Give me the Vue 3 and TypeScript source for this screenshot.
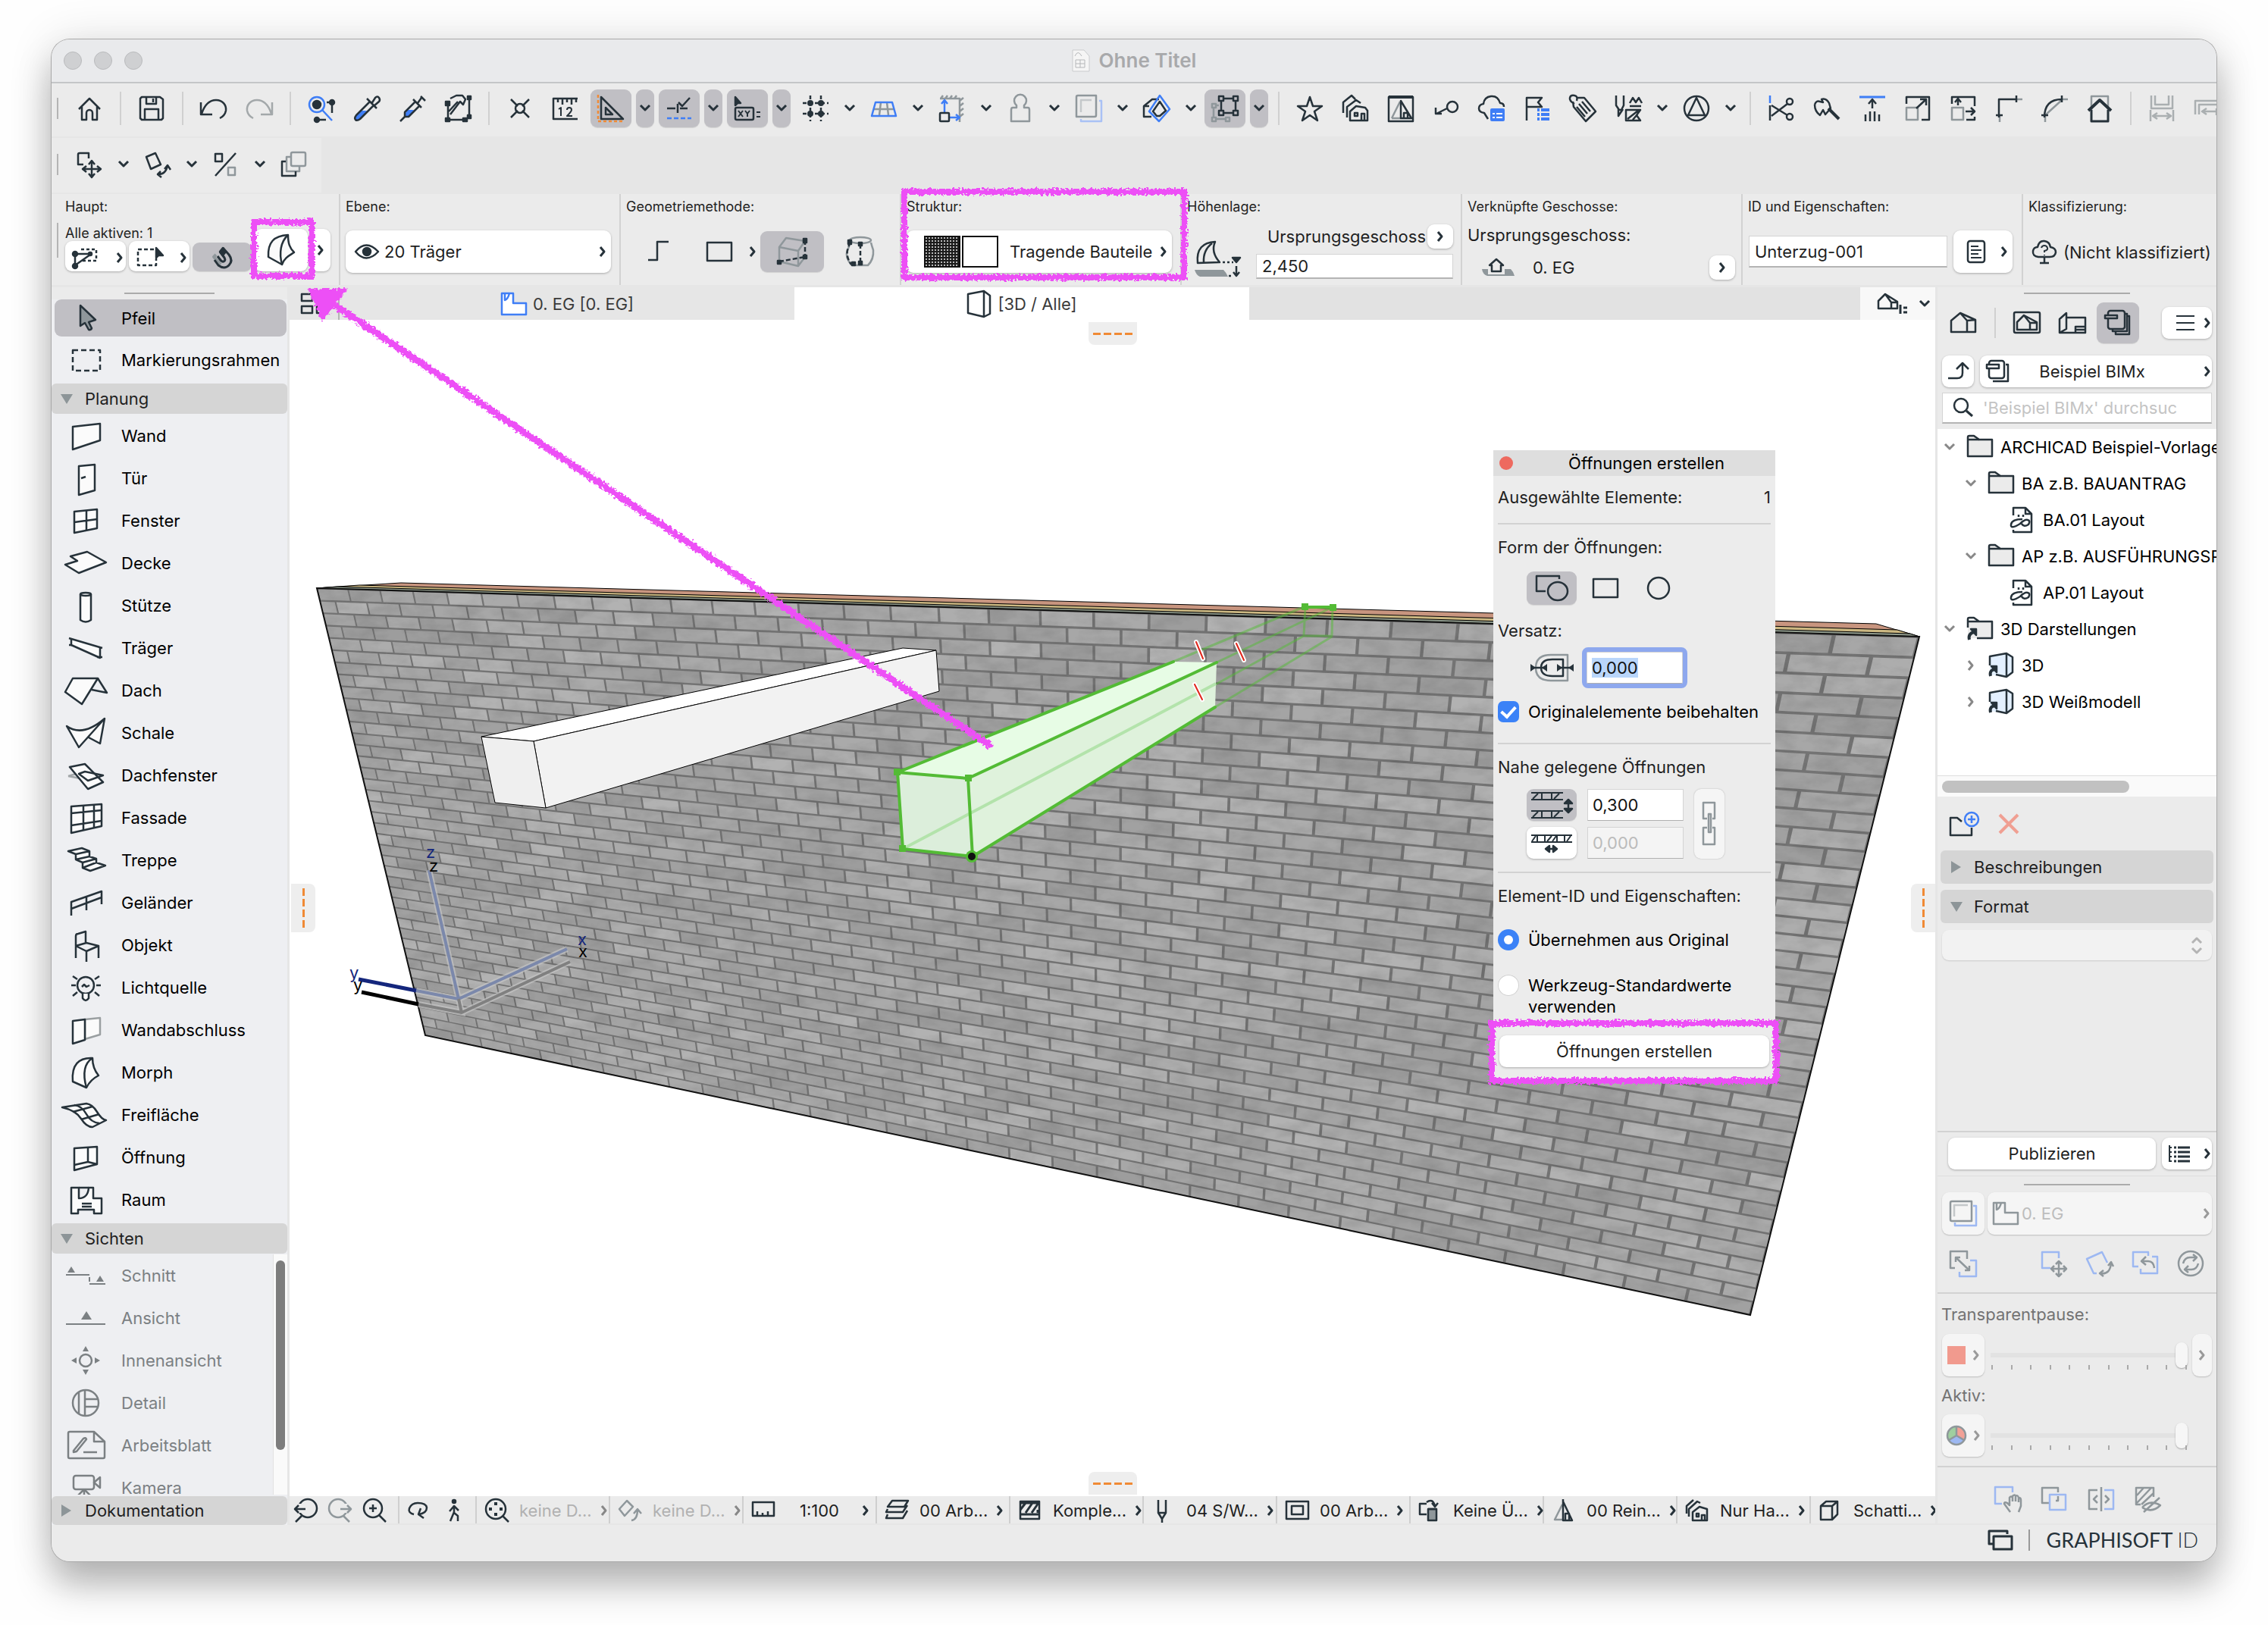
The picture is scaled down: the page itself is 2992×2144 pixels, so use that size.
<script setup lang="ts">
import { h, onMounted, ref } from 'vue'

const B = '#3f7ef6'
const G = '#8f979b'
const O = '#f08a35'

/* Inner markup of every glyph, keyed by name. Strokes inherit currentColor. */
const glyphs: Record<string, string> = {
  right: '<path d="M1 1l5 6l-5 6" stroke-width="3"/>',
  down: '<path d="M1 1l6 6l6-6" stroke-width="3"/>',
  home: '<path d="M4 19L18 5L32 19M8 16v17h6v-9a4 4 0 0 1 8 0v9h6V16"/>',
  save: '<path d="M5 3h24l4 3v25l-2 2H5l-2-2V5zM11 3v9h13V3M20 5v5M9 33V19h18v14"/>',
  undo: '<path d="M1 10v16h15M2 25C6 13 13 7 21 7c9 0 14 7 13 14c-1 5-4 8-8 10"/>',
  redo: '<path stroke="#a3a8aa" d="M35 10v16H20M34 25C30 13 23 7 15 7C6 7 1 14 2 21c1 5 4 8 8 10"/>',
  find: `<circle cx="12" cy="13" r="10" stroke="${B}"/><circle cx="12" cy="13" r="5" fill="currentColor"/><path stroke="${B}" d="M19 20L32 34"/><path d="M25 10h7v14M12 33h12"/><circle cx="32" cy="10" r="3" fill="currentColor"/><circle cx="12" cy="33" r="3" fill="currentColor"/>`,
  dropper: `<path d="M5 26L10 21h8L8 33q-3 2-5-1t2-6" fill="${B}" stroke="none"/><path d="M22 9L4 27q-3 4-1 6t6-1L27 14M18 5l13 13M24 12l5-8q3-3 5 0t0 5l-7 6"/>`,
  syringe: `<path d="M9 24l3-4h8l-6 8l-5 1z" fill="${B}" stroke="none"/><path d="M22 9L8 23v6h5L27 15M19 6l11 11M25 11l5-7M29 2l6 6M8 29l-6 6"/>`,
  hammer: '<path d="M5 14v18M5 33h22M33 5v23M8 5l8-4h8l4 5l-3 7l-4-4L8 26M18 9L6 22"/><g fill="currentColor"><rect x="2" y="9" width="5" height="5"/><rect x="2" y="31" width="5" height="4"/><rect x="25" y="31" width="5" height="4"/><rect x="31" y="2" width="4" height="4"/><rect x="31" y="27" width="4" height="4"/></g>',
  snap: '<path d="M6 6l9 9M21 21l9 9M30 6l-9 9M15 21L6 30"/><circle cx="18" cy="18" r="6"/>',
  ruler: '<path d="M34 5H2v27h32M8 5v5M14 5v8M20 5v5M26 5v8M32 5v5"/><path stroke-width="2" d="M9 19l3-2v11M20 20q0-3 3-3t3 3q0 2-6 8h7"/>',
  tri: `<path d="M5 3v29h29zM11 17v9h9z"/><path stroke="${O}" stroke-dasharray="4 3" d="M1 0v35h35"/>`,
  guide: `<path d="M2 18h11M19 18h10M16 12v12M17 10l5 5L32 4"/><path stroke="${B}" stroke-dasharray="6 3" d="M2 31h32"/>`,
  xy: '<path d="M2 3v11l3-3l4 0z" fill="currentColor"/><rect x="2" y="17" width="24" height="16" rx="2"/><path stroke-width="2" d="M6 21l6 8M12 21l-6 8M15 21l3 4l3-4M18 25v4M30 23h5M30 29h5"/>',
  grid: '<path stroke-dasharray="5 3" d="M11 1v34M25 1v34M1 11h34M1 25h34"/><g fill="currentColor" stroke="none"><circle cx="11" cy="11" r="4"/><circle cx="25" cy="11" r="4"/><circle cx="11" cy="25" r="4"/><circle cx="25" cy="25" r="4"/></g>',
  plane: `<path stroke="${G}" d="M4 19h28M14 10l-2 17M22 10l2 17"/><path stroke="${B}" d="M7 10h22l5 18H2z"/>`,
  origin: `<path stroke="${G}" d="M2 5h26v31M3 5l3-4M9 5l3-4M15 5l3-4M21 5l3-4M28 8l5-4M28 15l5-4M28 22l5-4M28 29l5-4"/><path stroke="${B}" d="M8 23V9M4 12l4-5l4 5M14 30h13M23 26l5 4l-5 4"/><rect x="2" y="24" width="12" height="11" rx="1"/>`,
  person: `<path stroke="${G}" d="M13 14a8 8 0 1 1 10 0v3h5q2 0 2 3v15H6V20q0-3 2-3h5z"/>`,
  trace: `<path stroke="${G}" d="M2 3q0-2 2-2h24v26q0 2-2 2H2z"/><path stroke="#c4c8ca" d="M8 23V7h14"/><path stroke="#a9c1f5" d="M32 8h3v27H8v-3"/>`,
  cut: `<path d="M11 29H1V15L12 6h9M1 15h7M22 9l-9 13l5 6h4l8-7z"/><path stroke="${B}" d="M8 22L22 1l13 18L21 35z"/>`,
  group: `<g stroke="${G}"><rect x="1" y="12" width="5" height="5"/><rect x="1" y="30" width="5" height="5"/><rect x="19" y="30" width="5" height="5"/><path d="M3 17v13M6 32h13M6 14h4"/></g><rect x="10" y="2" width="6" height="6"/><rect x="29" y="2" width="6" height="6"/><rect x="10" y="21" width="6" height="6"/><rect x="29" y="21" width="6" height="6"/><path d="M16 5h13M16 24h13M13 8v13M32 8v13"/>`,
  star: '<path d="M18 3l4 12h12l-10 7l4 12l-10-7l-10 7l4-12l-10-7h12z"/>',
  fav: '<path d="M2 24V10L13 1l5 5M7 30V16l12-9l6 4M11 34V22l8-7l12 2l3 4v13zM17 24h4v4h-4zM26 34v-9h4v9"/>',
  view3d: `<path stroke="${G}" d="M6 31L17 9M6 31h12"/><rect x="2" y="3" width="32" height="32"/><path d="M2 3h32" stroke-width="4"/><path d="M18 8v23h14zM22 31v-7h5v7"/>`,
  key: '<circle cx="26" cy="16" r="7"/><path d="M19 18L5 25M4 17v8h8"/>',
  cloud: `<path d="M13 32L8 24q-7-1-7-6t6-6q1-9 10-10t12 9q5 0 5 5"/><g stroke="none" fill="${B}"><rect x="16" y="18" width="19" height="17" rx="2"/></g><path stroke="#fff" stroke-width="2" d="M19 25h3M24 25h8M19 30h3M24 30h8"/>`,
  flag: `<path d="M4 34V4h20l-5 6l5 6H4"/><path stroke="${B}" stroke-width="4" d="M18 20h3M23 20h11M18 26h3M23 26h11M18 32h3M23 32h11"/>`,
  tag: '<path d="M10 4h10L35 22L22 35L6 16L5 9M7 12Q0 8 1 4t6-3t3 7M13 12l11 13M17 9l11 13M10 16l11 13"/>',
  pens: '<path d="M2 1v13l4 6h3l3-6V1M5 19v9l6-9M20 11l4-7l4 6l4-6l4 7M20 15h15M15 20h19l-5 7l5 7H15zM17 32l14-11M24 33l6-7"/>',
  compass: '<circle cx="18" cy="18" r="16"/><path d="M18 4L7 27h22z"/>',
  scissors: `<path stroke="${B}" d="M3 1v10"/><path d="M3 14v20M5 14l21 13M5 28L26 12"/><circle cx="29" cy="9" r="4"/><circle cx="29" cy="29" r="4"/>`,
  split: '<path d="M2 13q2-6 7-4l4 1l-2-4q6-2 10 5l2 7l-7 8l-3-6l-4 7q-7-5-7-14"/><path stroke-width="4" d="M20 18l14 14"/>',
  adjust: `<path stroke="${B}" stroke-width="3" d="M1 3h34"/><path d="M18 18V6M13 12l5-6l5 6M9 26v9M15 22v13M21 22v13M27 26v9"/>`,
  resize: `<rect x="3" y="17" width="15" height="16" stroke="${G}"/><path d="M3 12V3h30v30H23M16 18L29 6M21 6h8v8"/>`,
  stretch: `<rect x="3" y="17" width="15" height="16" stroke="${G}"/><path d="M3 12V3h30v7M33 29v4H22M33 10v5M11 14V6M7 10l4-5l4 5M21 22h10M28 17l5 5l-5 5"/>`,
  corner: `<path stroke="${G}" d="M6 28v8M28 6h8"/><path d="M1 27h9M5 30V6h24M28 1v9"/>`,
  fillet: `<path stroke="${G}" d="M6 28v8M28 6h8M6 27L28 7"/><path d="M1 27h9M5 30Q5 6 28 6M28 1v9"/>`,
  roofhome: `<path stroke="${G}" d="M7 20V2h22v18"/><path stroke-width="4" d="M3 21L18 7l15 14"/><path stroke-width="3" d="M7 20v15h22V20"/>`,
  dimA: `<g stroke="#aaafb1"><path d="M4 1v17h28V1M9 1v12h18V1M3 20v15M33 20v15M6 28h24M12 24l-6 4l6 4M24 24l6 4l-6 4"/></g>`,
  dimB: `<g stroke="#aaafb1"><path d="M2 26V8h34M7 26V13h29M12 22h24M17 18l-6 4l6 4M30 18v9"/></g>`,
  move: '<path d="M10 18H3V5q0-2 2-2h12v7M21 14v20M10 24h22M17 18l4-5l4 5M17 30l4 5l4-5M14 20l-5 4l5 4M28 20l5 4l-5 4"/>',
  rotate: '<path d="M9 24L3 8L15 3l7 15zM19 31q10 0 12-12M27 24l4-5l4 6M22 27l-4 4l5 4"/>',
  mirror: `<rect x="4" y="4" width="9" height="10"/><path d="M31 3L4 33"/><rect x="21" y="22" width="9" height="10" stroke="${G}"/>`,
  multi: `<g stroke="${G}"><rect x="14" y="2" width="19" height="18" rx="2"/><path d="M14 8H8v19h17v-7"/></g><path d="M7 14H2v19h18v-6"/>`,
  seldash: '<path stroke-dasharray="4 3" d="M12 3h20v15H14"/><path d="M4 9h20M4 9v16M4 24L24 10"/><g fill="currentColor"><circle cx="4" cy="9" r="3"/><circle cx="4" cy="25" r="3"/><circle cx="24" cy="9" r="2"/></g>',
  marq: '<path stroke-dasharray="5 3" d="M24 3H3v21h24v-9"/><path d="M27 1v13l3-3h6z" fill="currentColor"/>',
  magnet: `<path stroke="${G}" stroke-width="4" d="M8 13l-3 3l9 10"/><path stroke-width="3" d="M17 4l8 9q6 8 0 14q-6 6-14 0l-5-7M13 9l6 8q2 4-1 5q-2 1-5-3l-3-4"/><path fill="currentColor" d="M13 9l4-5l4 5l-4 5z"/>`,
  morph: '<path fill="#fafafa" d="M2 30C1 11 9 2 28 1C28 12 30 18 36 24C30 28 23 31 20 40z"/><path d="M28 1C18 10 16 25 20 40"/>',
  eye: '<path d="M1 12Q15-5 31 12Q15 29 1 12z"/><circle cx="16" cy="12" r="5" fill="currentColor"/>',
  step: '<path d="M2 25h12V1h15"/>',
  rect: '<rect x="2" y="2" width="32" height="24"/>',
  frame3d: `<path stroke="${G}" d="M3 33V14L12 2l25 4M3 14l25 5v20L3 33M28 19l9-13M28 39l9-12"/><path d="M37 5v22M3 33l34-6" stroke-dasharray="6 3"/><g fill="currentColor"><rect x="35" y="3" width="4" height="5"/><rect x="35" y="25" width="4" height="4"/><rect x="1" y="32" width="4" height="4"/></g>`,
  barrel: `<g stroke="${G}"><ellipse cx="20" cy="5" rx="14" ry="4"/><path d="M34 8q1 4 3 10q1 12-7 20H9Q-1 28 3 18Q6 12 6 8"/></g><path d="M6 8q-1 4-3 10Q1 27 8 37M20 10v26" stroke-dasharray="6 3"/><g fill="currentColor"><rect x="4" y="5" width="4" height="5"/><rect x="18" y="8" width="4" height="4"/><rect x="9" y="34" width="4" height="4"/><rect x="18" y="33" width="4" height="4"/></g>`,
  hoehe: `<path stroke="none" fill="${G}" d="M1 38h38q4 4 6 9H8q-5-2-7-9z"/><path d="M5 29C3 10 12 2 28 1C24 10 26 19 34 28z"/><path d="M24 3Q12 12 13 28"/><path stroke-dasharray="3 3" d="M38 28h14M46 46h6"/><path d="M56 33v12M52 41l4 5l4-5"/><path d="M51 22h10l-5 6z" fill="currentColor"/>`,
  geschoss: `<path stroke="none" fill="${G}" d="M1 14h8v7h22v-7h8q4 4 5 9H8q-6-2-7-9z"/><path d="M20 1L11 9h3v8h12V9h3z"/>`,
  doc: '<rect x="2" y="2" width="22" height="28" rx="3"/><path d="M6 9h10M6 14h14M6 19h10M6 24h14" stroke-width="2"/>',
  cloudq: '<path d="M9 23Q1 22 2 15q1-5 6-5q2-9 9-8t8 8q7 1 7 7q-1 6-8 6zM17 24v7M11 31h12"/><path stroke-width="2" d="M13 11q1-3 4-3t4 3t-4 4v2M17 20v1"/>',
  panes: '<path d="M2 2h14v9H2zM22 2h14v9H22zM2 18h14v9H2zM22 18h14v9H22z"/>',
  plan: `<path stroke="${B}" fill="#fff" d="M2 2h15v13h17v15H2z"/><path stroke="${B}" d="M6 2v9q4-1 6-9"/>`,
  box3d: '<path d="M2 5L23 1v34L2 30zM23 1l8 6v24l-8 4"/>',
  houseList: '<path d="M2 21V11L11 2l16 10v9zM11 2l8 11v8M19 13h8"/><path d="M31 16v12M35 20h5M35 26h5" stroke-width="3"/>',
  house: '<path d="M2 27V12L14 2l20 9v16zM14 2l9 10v15M23 12l11-1"/>',
  houseFrame: '<rect x="1" y="1" width="34" height="27" rx="2"/><path d="M5 24V14l9-9l17 9v10zM14 5l8 10v9M22 15h9"/>',
  layoutPlan: '<path d="M1 28V10L10 2v21L1 28h34V8H10M22 28v-8h13M22 24h13"/>',
  books: '<rect x="5" y="1" width="22" height="24" rx="3"/><path d="M27 5h3v23H11v-3M31 8h2v24H15v-3"/><path fill="#c0bfc4" d="M1 7h16v4H1z"/>',
  book: '<rect x="4" y="1" width="20" height="23" rx="3"/><path d="M26 6h3v22H9"/><path fill="#fff" d="M1 6h16v5H1z"/>',
  up: '<path d="M2 22h12q7 0 7-7V3M13 10l8-8l8 8"/>',
  lens: '<circle cx="11" cy="10" r="9"/><path stroke-width="3" d="M18 17l8 7"/>',
  burger: '<path stroke-width="2" d="M1 2h24M1 11h24M1 20h24"/>',
  folder: '<path fill="#ebebeb" d="M2 30V5q0-2 2-2h6l7 5h17v22z"/><path d="M2 8h15"/>',
  folderLink: '<path fill="#ebebeb" stroke="none" d="M2 8h32v22H2z"/><path d="M2 16V5q0-2 2-2h6l7 5h17v22H14M2 8h15"/><path stroke-width="4" d="M4 32q-2-8 6-10"/><path d="M6 18h7v8z" fill="currentColor"/>',
  cubeLink: '<path fill="#e3f0ff" stroke="none" d="M3 6L25 2l8 5v20l-8 6L3 30z"/><path d="M3 18V6L25 2l8 5v20l-8 6l-14-3M25 2v31"/><path stroke-width="4" d="M4 32q-2-8 6-9"/><path d="M5 19h7v8z" fill="currentColor"/>',
  sheet: '<path d="M6 12V2h16l8 8v24H6v-3M22 2v8h8"/><path d="M18 17Q4 17 3 24t12-1q6-6 10-5t1 6q-6 4-9-1M13 11v3M19 11v3"/>',
  newFolder: `<path d="M30 22v10H2V9h9l6 5"/><circle cx="30" cy="11" r="9" stroke="${B}"/><path stroke="${B}" d="M30 6v10M25 11h10"/>`,
  cross: '<path stroke="#f09f92" stroke-width="4" d="M2 3l24 24M26 3L2 27"/>',
  updown: '<path stroke="#b4b4b4" stroke-width="3" d="M1 7l6-6l6 6M1 14l6 6l6-6"/>',
  listTree: '<path stroke-width="2" d="M2 2v22M2 5h3M2 11h3M2 17h3M2 23h3"/><path stroke-width="3" d="M8 5h3M8 11h3M8 17h3M8 23h3M13 5h16M13 11h16M13 17h16M13 23h16"/>',
  traceW: `<path stroke="${G}" d="M2 4q0-2 2-2h26v26H4q-2 0-2-2z"/><path stroke="#c4c8ca" d="M7 22V7h18"/><path stroke="#9db8f2" d="M32 8h4v26H8v-4"/>`,
  planG: `<path stroke="${G}" d="M2 2h15v13h17v15H2zM6 2v9q4-1 6-9"/>`,
  swap: `<path stroke="${G}" d="M8 24H2V2h22v10M9 10l18 17M9 16v-6h6M27 21v6h-6"/><path stroke="#9db8f2" d="M28 14h8v21H14v-6"/>`,
  moveB: `<path stroke="#9db8f2" d="M13 24H2V3h22v8"/><path stroke="${G}" d="M24 15v20M14 25h20M20 19l4-4l4 4M20 31l4 4l4-4M18 21l-4 4l4 4M30 21l4 4l-4 4"/>`,
  rotateB: `<path stroke="#9db8f2" d="M14 31h-4L1 12L21 3l7 14"/><path stroke="${G}" d="M19 31q13 2 14-14M29 21l4-5l3 6M23 27l-5 4l5 4"/>`,
  backB: `<path stroke="#9db8f2" d="M9 22H2V3h20v5M27 9h7v22H12v-6"/><path stroke="${G}" d="M14 15h8q7 0 8 9M19 9l-6 6l6 5"/>`,
  refresh: `<g stroke="${G}"><circle cx="18" cy="18" r="16"/><path d="M8 18q2-8 9-8h8M21 6l5 4l-5 5M28 18q-2 8-9 8h-8M15 21l-5 5l5 4"/></g>`,
  hand: `<path stroke="#9db8f2" d="M11 24H2V2h23v7"/><path stroke="${G}" d="M22 35l-8-11q0-3 4-1l3 3V16q2-3 4 0v-2q3-3 4 0q3-2 4 2q3 0 3 3v8l-3 8M25 16v5M29 15v6M33 16v6"/>`,
  unite: `<path stroke="${G}" d="M11 23H2V3h21v6M20 20h3v-6"/><rect x="12" y="12" width="21" height="20" stroke="#9db8f2"/>`,
  splitV: `<path stroke="${G}" d="M13 31H2V6h11M18 2v32M13 13l-5 5l5 5M23 13l5 5l-5 5"/><path stroke="#9db8f2" d="M22 6h12v25H22"/>`,
  hide: `<g stroke="${G}"><path d="M8 25H2V3h23v12M3 13L12 3M3 23L22 3M9 25l16-15"/><path d="M10 29q10-11 24-3q-11 11-24 3M12 35L33 16"/></g>`,
  pie: '<circle cx="13" cy="13" r="12" fill="#9db8f2" stroke="none"/><path d="M13 13V1A12 12 0 0 0 3 19z" fill="#9fcf9f" stroke="none"/><path d="M13 13V1A12 12 0 0 1 23 19z" fill="#f2a196" stroke="none"/><path stroke="#8f979b" d="M13 1v12L3 19M13 13l10 6"/><circle cx="13" cy="13" r="12" stroke="#8f979b"/>',
  windows: '<path stroke-width="3" d="M7 19H2V2h24v4"/><rect x="8" y="9" width="24" height="17" stroke-width="3"/>',
  zprev: '<circle cx="20" cy="13" r="12"/><path fill="#ebebeb" stroke="none" d="M5 7h8v12H5z"/><path d="M17 14H3M8 9l-5 5l5 5M12 23l-8 8"/>',
  znext: `<g stroke="${G}"><circle cx="14" cy="13" r="12"/><path fill="#ebebeb" stroke="none" d="M20 7h8v12h-8z"/><path d="M17 14h14M26 9l5 5l-5 5M21 23l8 8"/></g>`,
  zin: '<circle cx="14" cy="13" r="12"/><path d="M14 8v10M9 13h10M22 22l9 9"/>',
  zfit: '<circle cx="15" cy="14" r="13"/><path stroke-width="4" d="M15 5v4M15 19v4M6 14h4M20 14h4"/><path d="M24 23l8 8"/>',
  orbit: '<path d="M9 19Q1 17 3 11Q6 4 14 4q11 0 12 6q0 7-10 9M18 11l-3 8l7 5"/>',
  walk: '<circle cx="12" cy="3" r="2" fill="currentColor"/><path d="M12 8v9l-5 12M12 18l5 4v7M6 16l6-7l6 6"/>',
  dia: `<path stroke="${G}" d="M2 14L12 3l8 8L9 23zM18 29q8-1 8-14M21 20l5-6l5 6"/>`,
  scale: '<path d="M2 5h28v18H2zM8 23v-6M15 23v-4M22 23v-6"/>',
  layers: '<path d="M10 3h21l-5 8H4zM4 14l-2 4h22l6-9M4 21l-2 5h22l6-10"/>',
  hatch: '<rect x="3" y="4" width="25" height="23"/><path stroke-width="3" d="M3 6h25M3 21h25M3 15l7-9M10 19l9-13M18 19l9-13M26 19v-4"/>',
  pen: '<path d="M9 2v17l5 8l5-8V2M9 19h10M14 26v6"/>',
  frame: '<rect x="2" y="4" width="29" height="23"/><rect x="9" y="10" width="15" height="11"/>',
  override: `<path d="M11 21H2V7h9"/><rect x="13" y="14" width="11" height="15" fill="${G}"/><path d="M11 5q8-6 11 5M18 6l4 5l4-5M13 14h11"/>`,
  reno: `<path stroke="${G}" d="M14 8L4 28h10"/><path d="M15 1v28h12L15 4M18 28v-8h5v8"/>`,
  nurh: '<path d="M2 20V10l9-8M5 24V14L16 4l4 2M10 29V18l9-7l10 3v15zM15 20h3v4h-3zM22 29v-7h4v7"/>',
  shade: '<path d="M3 10l7-6h15v17l-7 7H3zM3 10h15v18M18 10l7-6"/>',
  /* toolbox: 60 × 44 drawing box */
  pfeil: `<path fill="${G}" d="M22 3v27l6-4l5 9q3 1 4-2l-4-8l9-3z"/>`,
  rahmen: '<path stroke-dasharray="7 4" d="M12 9h36v27H12z"/>',
  wand: '<path fill="#fbfbfb" d="M12 8L48 4V26L12 38z"/>',
  tuer: '<path fill="#fbfbfb" d="M20 4L41 2V36L20 42z"/><path d="M23 20l6-2"/>',
  fenster: '<path fill="#fbfbfb" d="M14 8L44 5V30L14 36z"/><path d="M30 7v26M14 22l30-4"/>',
  decke: '<path fill="#fbfbfb" d="M2 22l16-5l-9-6L31 5L56 19L20 33z"/>',
  stuetze: '<path fill="#fbfbfb" d="M22 5v34q7 5 14 0V5"/><ellipse cx="29" cy="5" rx="7" ry="2"/>',
  traeger: '<path fill="#fbfbfb" d="M10 8v8L48 33V20"/><path d="M7 7L51 20M7 16h4M44 32h7"/>',
  dach: '<path fill="#fbfbfb" d="M2 22L12 4h33L24 38z"/><path d="M45 4l12 19l-20-4"/>',
  schale: '<path fill="#fbfbfb" d="M4 11Q25 26 54 1L20 39zM54 1l-6 33l-15-8"/>',
  dachfenster: '<path stroke="#a3a8aa" d="M6 21L27 15M6 21l16 3"/><path fill="#fbfbfb" d="M8 9L28 5L52 29L32 38z"/><path d="M20 18l8-3L52 20L32 27z"/>',
  fassade: '<path fill="#fbfbfb" d="M10 5L50 2V31L10 40z"/><path d="M26 4v33M40 3v30M10 14l40-4M10 30l40-6"/>',
  treppe: '<path fill="#fbfbfb" d="M6 8L24 4l10 4L16 12zM16 12v7l18-4V8M16 19l9 4l18-5l-9-3M25 23v7l10 4l20-7l-12-4v-5M25 30l18-7"/>',
  gelaender: '<path d="M10 37V19L50 5V22M10 28L50 13M30 12v18"/>',
  objekt: '<path d="M16 37V8q0-3 3-3l10-3v16M16 21l14-4l16 4l-16 7zM30 28v14M46 21v16"/>',
  licht: '<circle cx="29" cy="17" r="11"/><path fill="#fbfbfb" d="M25 28v6q4 6 8 0v-6M24 19l3-3l3 3l4-2M12 5l6 4M10 17h6M12 31l6-5M47 5l-6 4M43 17h6M47 31l-6-5"/>',
  wandab: '<path fill="#fbfbfb" stroke="#9a9fa1" d="M28 6L48 4V26L28 32z"/><path fill="#fbfbfb" d="M12 8L28 6V33L12 38z"/>',
  morphT: '<path fill="#fbfbfb" d="M12 32C10 10 20 0 38 1C38 12 41 18 46 24C40 27 34 32 30 40z"/><path d="M38 1C27 8 25 22 30 40"/>',
  frei: '<path fill="#fbfbfb" d="M-2 10L30 5Q38 6 44 16T56 27L38 36Q30 36 23 25T-2 10zM14 7Q24 8 30 19T47 31M12 16l26-7M23 26l24-7"/>',
  oeffnung: '<path fill="#fbfbfb" d="M14 8L44 6V29L14 37z"/><path d="M32 7v19L14 30M32 26l12 3"/>',
  raum: '<path fill="#fbfbfb" d="M10 4h10v14q12 0 13-14h6v14h11v20H40v-5H19v5H10z"/><path d="M24 25h13M24 29h13M20 4h13"/>',
  schnitt: '<path stroke-width="2" d="M3 19h31M34 31h21M34 22v6"/><path stroke="none" fill="currentColor" d="M5 16l5-8l5 8zM43 28l5-8l5 8z"/>',
  ansicht: '<path stroke-width="2" d="M3 28h52"/><path stroke="none" fill="currentColor" d="M23 22l7-11l7 11z"/>',
  innen: '<circle cx="29" cy="20" r="8"/><path stroke="none" fill="currentColor" d="M25 8l4-7l4 7zM25 32l4 7l4-7zM17 16l-7 4l7 4zM41 16l7 4l-7 4z"/>',
  detail: '<circle cx="29" cy="20" r="17"/><path d="M20 6v28M28 3v34M28 15h17M28 25h17"/>',
  blatt: '<path d="M8 2h32l14 13v20q0 2-2 2H8q-2 0-2-2V4q0-2 2-2zM40 2v13h14M13 27L26 11q3-2 4 1L17 28l-4 1zM26 29h18"/>',
  kamera: '<rect x="13" y="4" width="27" height="18" rx="3"/><path d="M40 13l8-7v14zM27 22v12M27 22l-8 8M27 22l8 8"/>',
  /* palette glyphs */
  shapeBoth: '<path d="M14 22H2V2h30v4"/><ellipse cx="30" cy="22" rx="13" ry="12"/>',
  shapeRect: '<rect x="2" y="4" width="32" height="24"/>',
  shapeCircle: '<circle cx="16" cy="16" r="14"/>',
  offset: `<path stroke="${G}" d="M50 2v34H28Q8 36 8 19T28 2z"/><path d="M44 8v22H30Q15 30 15 19T30 8zM1 19h22M36 19h22"/><path fill="currentColor" stroke="none" d="M1 14l7 5l-7 5zM23 14l-7 5l7 5zM36 14l7 5l-7 5zM58 14l-7 5l7 5z"/>`,
  gapV: '<path stroke-width="2" d="M2 3h42M2 12h42M2 27h42M2 36h42M16 3v9M29 3v9M16 27v9M29 27v9M4 11l7-7M32 11l7-7M4 35l7-7M32 35l7-7"/><path d="M51 13v15M46 17l5-5l5 5zM46 24l5 5l5-5z" fill="currentColor"/>',
  gapH: '<path stroke-width="2" d="M2 3h54M2 12h54M10 3v9M20 3v9M36 3v9M46 3v9M3 11l5-7M23 11l6-7M30 11l5-7M49 11l5-7"/><path d="M22 21h12M26 17l-5 4l5 4zM31 17l5 4l-5 4z" fill="currentColor"/>',
  link: `<g stroke="${G}"><path d="M6 22H1V1h15v21h-3M6 34H1v22h15V34h-3M8 40V16h3v24z"/></g>`,
  fileT: '<path fill="#f5f5f5" stroke="#c9cbcd" stroke-width="1" d="M1 1h15l7 8v20H1z"/><path stroke="#b5b7b9" stroke-width="1" d="M4 9q4-9 9 0M5 14h12v10H5zM11 14v10M5 19h12"/>',
}

interface IconProps { n: string; w?: number | string; h?: number | string }
const Ic = (p: IconProps) =>
  h('svg', {
    class: 'ic',
    width: p.w ?? 36,
    height: p.h ?? 36,
    viewBox: `0 0 ${p.w ?? 36} ${p.h ?? 36}`,
    'aria-hidden': 'true',
    innerHTML: glyphs[p.n],
  })

interface Tool { n?: string; drop?: boolean; on?: boolean; sep?: boolean; label?: string }
const t = (n: string, label: string, drop = false, on = false): Tool => ({ n, label, drop, on })
const sep: Tool = { sep: true }
const toolbar: Tool[] = [
  t('home', 'Start'), sep, t('save', 'Sichern'), sep, t('undo', 'Widerrufen'), t('redo', 'Wiederholen'), sep,
  t('find', 'Suchen'), t('dropper', 'Aufnehmen'), t('syringe', 'Übertragen'), t('hammer', 'Bearbeiten'), sep,
  t('snap', 'Fang'), t('ruler', 'Lineal'), t('tri', 'Hilfslinien', true, true), t('guide', 'Fanglinien', true, true),
  t('xy', 'Koordinaten', true, true), t('grid', 'Raster', true), t('plane', 'Ebene', true), t('origin', 'Ursprung', true),
  t('person', 'Schwerkraft', true), t('trace', 'Transparentpause', true), t('cut', 'Schnittebene', true),
  t('group', 'Gruppieren', true, true), sep, t('star', 'Favoriten'), t('fav', 'Ansichten'), t('view3d', '3D-Ansicht'),
  t('key', 'Etikett'), t('cloud', 'Cloud'), t('flag', 'Markierung'), t('tag', 'Eigenschaften'), t('pens', 'Stifte', true),
  t('compass', 'Norden', true), sep, t('scissors', 'Trennen'), t('split', 'Teilen'), t('adjust', 'Anpassen'),
  t('resize', 'Größe'), t('stretch', 'Strecken'), t('corner', 'Verschneiden'), t('fillet', 'Abrunden'),
  t('roofhome', 'Dach'), sep, t('dimA', 'Bemaßung'), t('dimB', 'Bemaßungskette'),
]
const toolbar2: Tool[] = [t('move', 'Verschieben', true), t('rotate', 'Drehen', true), t('mirror', 'Spiegeln', true), t('multi', 'Vervielfältigen')]

const planung = [
  ['wand', 'Wand'], ['tuer', 'Tür'], ['fenster', 'Fenster'], ['decke', 'Decke'], ['stuetze', 'Stütze'], ['traeger', 'Träger'],
  ['dach', 'Dach'], ['schale', 'Schale'], ['dachfenster', 'Dachfenster'], ['fassade', 'Fassade'], ['treppe', 'Treppe'],
  ['gelaender', 'Geländer'], ['objekt', 'Objekt'], ['licht', 'Lichtquelle'], ['wandab', 'Wandabschluss'], ['morphT', 'Morph'],
  ['frei', 'Freifläche'], ['oeffnung', 'Öffnung'], ['raum', 'Raum'],
]
const sichten = [
  ['schnitt', 'Schnitt'], ['ansicht', 'Ansicht'], ['innen', 'Innenansicht'], ['detail', 'Detail'], ['blatt', 'Arbeitsblatt'], ['kamera', 'Kamera'],
]
const tree = [
  { level: 0, open: true, icon: 'folder', text: 'ARCHICAD Beispiel-Vorlage' },
  { level: 1, open: true, icon: 'folder', text: 'BA z.B. BAUANTRAG' },
  { level: 2, icon: 'sheet', text: 'BA.01 Layout' },
  { level: 1, open: true, icon: 'folder', text: 'AP z.B. AUSFÜHRUNGSPLANUNG' },
  { level: 2, icon: 'sheet', text: 'AP.01 Layout' },
  { level: 0, open: true, icon: 'folderLink', text: '3D Darstellungen' },
  { level: 1, open: false, icon: 'cubeLink', text: '3D' },
  { level: 1, open: false, icon: 'cubeLink', text: '3D Weißmodell' },
]
const quick = [
  ['scale', '1:100'], ['layers', '00 Arb...'], ['hatch', 'Komple...'], ['pen', '04 S/W...'], ['frame', '00 Arb...'],
  ['override', 'Keine Ü...'], ['reno', '00 Rein...'], ['nurh', 'Nur Ha...'], ['shade', 'Schatti...'],
]
const traceTools = ['moveB', 'rotateB', 'backB', 'refresh']
const footTools = ['hand', 'unite', 'splitV', 'hide']

/* Perspective mapping of the unit square onto the wall's front face. */
type Pt = [number, number]
const quad: Pt[] = [[418, 776], [2532, 840], [2309, 1735], [561, 1366]]
const [p0, p1, p2, p3] = quad
const dx1 = p1[0] - p2[0], dx2 = p3[0] - p2[0], sx = p0[0] - p1[0] + p2[0] - p3[0]
const dy1 = p1[1] - p2[1], dy2 = p3[1] - p2[1], sy = p0[1] - p1[1] + p2[1] - p3[1]
const den = dx1 * dy2 - dx2 * dy1
const gg = (sx * dy2 - dx2 * sy) / den
const hh = (dx1 * sy - sx * dy1) / den
const project = (u: number, v: number): string => {
  const w = gg * u + hh * v + 1
  const x = ((p1[0] - p0[0] + gg * p1[0]) * u + (p3[0] - p0[0] + hh * p3[0]) * v + p0[0]) / w
  const y = ((p1[1] - p0[1] + gg * p1[1]) * u + (p3[1] - p0[1] + hh * p3[1]) * v + p0[1]) / w
  return `${x.toFixed(1)} ${y.toFixed(1)}`
}
let seed = 7
const rnd = () => (seed = (seed * 16807) % 2147483647) / 2147483647
const shades = ['#a1a1a1', '#a4a4a4', '#a7a7a7', '#aaaaaa', '#adadad', '#b2b2b2', '#9d9d9d']
const ROWS = 41
const COLS = 31
const bricks = shades.map((fill) => ({ fill, d: '' }))
for (let r = 0; r < ROWS; r++) {
  const shift = r % 2 ? 0.5 : 0
  for (let c = -1; c < COLS; c++) {
    const u0 = Math.max(0, (c + shift + 0.025) / COLS)
    const u1 = Math.min(1, (c + shift + 0.975) / COLS)
    if (u1 <= u0) continue
    const v0 = (r + 0.07) / ROWS
    const v1 = (r + 0.93) / ROWS
    bricks[Math.floor(rnd() * shades.length)].d += `M${project(u0, v0)}L${project(u1, v0)}L${project(u1, v1)}L${project(u0, v1)}Z`
  }
}

const offsetField = ref<HTMLInputElement | null>(null)
onMounted(() => {
  offsetField.value?.focus({ preventScroll: true })
  offsetField.value?.select()
})
</script>

<template>
  <div class="page">
    <main class="window">
      <header class="titlebar">
        <span class="lights"><i></i><i></i><i></i></span>
        <h1><Ic n="fileT" :w="24" :h="30" />Ohne Titel</h1>
      </header>

      <nav class="bar" aria-label="Werkzeugleiste">
        <span class="grip"></span>
        <template v-for="(b, i) in toolbar" :key="i">
          <span v-if="b.sep" class="vsep"></span>
          <template v-else>
            <span class="cell"><button class="tool" :class="{ on: b.on }" :aria-label="b.label"><Ic :n="b.n" /></button></span>
            <span v-if="b.drop" class="dropcell"><button class="dropbtn" :class="{ on: b.on }" :aria-label="b.label + ' Optionen'"><Ic n="down" :w="14" :h="10" /></button></span>
          </template>
        </template>
      </nav>

      <div class="band">
        <nav class="bar second" aria-label="Bearbeiten">
          <span class="grip"></span>
          <template v-for="(b, i) in toolbar2" :key="i">
            <span class="cell"><button class="tool" :aria-label="b.label"><Ic :n="b.n" /></button></span>
            <span v-if="b.drop" class="dropcell"><button class="dropbtn" :aria-label="b.label + ' Optionen'"><Ic n="down" :w="14" :h="10" /></button></span>
          </template>
        </nav>
      </div>

      <section class="info">
        <div class="sec first">
          <h2>Haupt:</h2>
          <p class="small">Alle aktiven: 1</p>
          <div class="mainbtns">
            <button class="wbtn pair" aria-label="Auswahl"><Ic n="seldash" :w="36" :h="28" /><Ic n="right" :w="8" :h="14" /></button>
            <button class="wbtn pair" aria-label="Marquee"><Ic n="marq" :w="36" :h="28" /><Ic n="right" :w="8" :h="14" /></button>
            <button class="gbtn" aria-label="Magnet"><Ic n="magnet" :w="32" :h="32" /></button>
            <button class="wbtn morphbtn" aria-label="Morph"><Ic n="morph" :w="38" :h="42" /></button>
            <button class="wbtn thin" aria-label="Morph Optionen"><Ic n="right" :w="8" :h="14" /></button>
          </div>
        </div>
        <div class="sec">
          <h2>Ebene:</h2>
          <button class="wbtn wide"><Ic n="eye" :w="32" :h="24" /><span>20 Träger</span><Ic class="end" n="right" :w="8" :h="14" /></button>
        </div>
        <div class="sec">
          <h2>Geometriemethode:</h2>
          <div class="geo">
            <button class="plain" aria-label="Linie"><Ic n="step" :w="32" :h="28" /></button>
            <button class="plain" aria-label="Rechteck"><Ic n="rect" :w="36" :h="28" /></button>
            <Ic n="right" :w="8" :h="14" />
            <button class="gbtn geo3" aria-label="Körper"><Ic n="frame3d" :w="40" :h="40" /></button>
            <button class="plain last" aria-label="Rotation"><Ic n="barrel" :w="40" :h="40" /></button>
          </div>
        </div>
        <div class="sec">
          <h2>Struktur:</h2>
          <button class="wbtn wide struct"><span class="sw dots"></span><span class="sw"></span><span class="st">Tragende Bauteile</span><Ic class="end" n="right" :w="8" :h="14" /></button>
        </div>
        <div class="sec">
          <h2>Höhenlage:</h2>
          <div class="level">
            <Ic n="hoehe" :w="62" :h="50" />
            <div class="lvcol">
              <div class="lvtop"><span>Ursprungsgeschoss</span><button class="wbtn mini" aria-label="Geschoss wählen"><Ic n="right" :w="8" :h="14" /></button></div>
              <input class="field" type="text" value="2,450" aria-label="Höhe" />
            </div>
          </div>
        </div>
        <div class="sec">
          <h2>Verknüpfte Geschosse:</h2>
          <p class="linked">Ursprungsgeschoss:</p>
          <div class="eg"><Ic n="geschoss" :w="46" :h="24" /><span>0. EG</span><button class="wbtn mini" aria-label="Geschoss"><Ic n="right" :w="8" :h="14" /></button></div>
        </div>
        <div class="sec">
          <h2>ID und Eigenschaften:</h2>
          <div class="idrow"><input class="field id" type="text" value="Unterzug-001" aria-label="ID" /><button class="wbtn docbtn" aria-label="Eigenschaften"><Ic n="doc" :w="26" :h="32" /><Ic n="right" :w="8" :h="14" /></button></div>
        </div>
        <div class="sec tail">
          <h2>Klassifizierung:</h2>
          <p class="klass"><Ic n="cloudq" :w="34" :h="34" />(Nicht klassifiziert)</p>
        </div>
      </section>

      <div class="body">
        <aside class="toolbox">
          <div class="handle"><i></i></div>
          <button class="row sel"><Ic n="pfeil" :w="60" :h="40" />Pfeil</button>
          <button class="row marquee"><Ic n="rahmen" :w="60" :h="44" />Markierungsrahmen</button>
          <button class="group first"><i class="tri-d"></i>Planung</button>
          <button v-for="r in planung" :key="r[0]" class="row"><Ic :n="r[0]" :w="60" :h="40" />{{ r[1] }}</button>
          <button class="group gap"><i class="tri-d"></i>Sichten</button>
          <div class="scroller">
            <div class="views"><button v-for="r in sichten" :key="r[0]" class="row dim"><Ic :n="r[0]" :w="60" :h="40" />{{ r[1] }}</button></div>
            <div class="track"><i></i></div>
          </div>
          <button class="group last"><i class="tri-r"></i>Dokumentation</button>
        </aside>

        <section class="center">
          <div class="tabs">
            <button class="overview" aria-label="Übersicht"><Ic n="panes" :w="38" :h="30" /></button>
            <button class="tab"><Ic n="plan" :w="36" :h="32" />0. EG [0. EG]</button>
            <button class="tab active"><Ic n="box3d" :w="34" :h="36" />[3D / Alle]</button>
            <span class="tabfill"></span>
            <button class="tabmenu" aria-label="Ansichtsoptionen"><Ic n="houseList" :w="42" :h="30" /><Ic n="down" :w="14" :h="10" /></button>
          </div>

          <div class="viewport">
            <svg class="scene" viewBox="382 422 2171 1552" preserveAspectRatio="xMinYMin slice" role="img" aria-label="3D-Ansicht">
              <defs>
                <clipPath id="wallclip"><path d="M418 776L2532 840L2309 1735L561 1366Z" /></clipPath>
                <filter id="grain" x="0" y="0" width="100%" height="100%"><feTurbulence type="fractalNoise" baseFrequency=".03 .06" numOctaves="4" seed="4" /><feColorMatrix values="0 0 0 0 0  0 0 0 0 0  0 0 0 0 0  1.2 0 0 0 -.42" /></filter>
              </defs>
              <g stroke="#000" stroke-width="1">
                <path d="M418 776L529 769L2475 823L2532 840Z" fill="#c8957f" />
                <path d="M418 776L474 772L2503 831L2532 840Z" fill="#ccb882" />
                <path d="M418 776L445 774L2520 836L2532 840Z" fill="#8f9a8c" />
              </g>
              <path d="M418 776L2532 840L2309 1735L561 1366Z" fill="#747474" />
              <path v-for="b in bricks" :key="b.fill" :d="b.d" :fill="b.fill" />
              <g clip-path="url(#wallclip)"><rect x="418" y="770" width="2120" height="970" filter="url(#grain)" opacity=".14" /></g>
              <path d="M418 776L2532 840L2309 1735L561 1366Z" fill="none" stroke="#111" stroke-width="2" />

              <g stroke="#000" stroke-width="1" stroke-linejoin="round">
                <path fill="#fff" d="M635 972L1191 855L1235 858L704 978Z" />
                <path fill="#f2f2f2" d="M704 978L1235 858L1239 912L720 1066Z" />
                <path fill="#efefef" d="M635 972L704 978L720 1066L653 1059Z" />
              </g>

              <g fill="none" stroke="#53bb35" stroke-width="3" opacity=".5"><path d="M1548 873L1722 800M1605 874L1758 801M1603 933L1757 840M1600 905L1720 839M1722 800L1720 839H1757L1758 801" /></g>
              <path fill="#e7fce5" d="M1184 1019L1548 873L1605 874L1277 1027Z" />
              <path fill="#dff2dc" d="M1277 1027L1605 874L1603 933L1283 1130Z" />
              <path fill="#dceedb" d="M1184 1019L1277 1027L1283 1130L1191 1120Z" />
              <path stroke="#b3e3ab" stroke-width="4" d="M1191 1120L1604 902" />
              <g fill="none" stroke="#53bb35" stroke-width="4" stroke-linecap="round"><path d="M1548 873L1184 1019L1277 1027L1605 874M1184 1019L1191 1120L1283 1130L1277 1027M1283 1130L1603 933M1722 801H1758" /></g>
              <g fill="#53bb35"><rect x="1179" y="1014" width="9" height="9" /><rect x="1273" y="1022" width="9" height="9" /><rect x="1186" y="1115" width="9" height="9" /><rect x="1717" y="796" width="9" height="9" /><rect x="1754" y="797" width="9" height="9" /><circle cx="1282" cy="1130" r="8" /></g>
              <circle cx="1282" cy="1130" r="5" fill="#111" />
              <g fill="none" stroke-linecap="round"><path stroke="#fff" stroke-width="6" d="M1578 847l9 22M1631 849l10 22M1576 903l10 20" /><path stroke="#e0261c" stroke-width="2" d="M1578 847l9 22M1631 849l10 22M1576 903l10 20" /></g>

              <g fill="none">
                <path stroke="#c4c4c4" stroke-width="8" opacity=".7" d="M566 1148L605 1318L748 1252M549 1307L605 1318M609 1336L752 1269M552 1325L609 1336L605 1318" />
                <path stroke="#7b88ab" stroke-width="4" d="M566 1148L605 1318L748 1252M549 1307L605 1318" />
                <path stroke="#808080" stroke-width="4" d="M552 1325L609 1336L752 1269M605 1318L609 1336" />
                <path stroke="#14267c" stroke-width="5" d="M473 1292L549 1307" />
                <path stroke="#000" stroke-width="5" d="M477 1309L552 1325" />
              </g>
              <g class="axis"><text x="562" y="1132" fill="#14267c">z</text><text x="566" y="1150">z</text><text x="762" y="1247" fill="#14267c">x</text><text x="763" y="1263">x</text><text x="461" y="1291" fill="#14267c">y</text><text x="466" y="1307">y</text></g>
            </svg>
            <i class="dock top"></i><i class="dock bottom"></i><i class="dock left"></i><i class="dock right"></i>

            <form class="palette" @submit.prevent>
              <div class="ptitle"><i></i><span>Öffnungen erstellen</span></div>
              <div class="pcount"><span>Ausgewählte Elemente:</span><span>1</span></div>
              <hr />
              <p class="plabel">Form der Öffnungen:</p>
              <div class="shapes">
                <button type="button" class="gbtn" aria-label="Kombiniert"><Ic n="shapeBoth" :w="44" :h="36" /></button>
                <button type="button" class="plain" aria-label="Rechteckig"><Ic n="shapeRect" :w="36" :h="32" /></button>
                <button type="button" class="plain" aria-label="Rund"><Ic n="shapeCircle" :w="32" :h="32" /></button>
              </div>
              <label class="plabel versatz" for="versatz">Versatz:</label>
              <div class="offrow"><Ic n="offset" :w="60" :h="38" /><input id="versatz" ref="offsetField" class="pfield focus" type="text" value="0,000" /></div>
              <label class="check"><input type="checkbox" checked />Originalelemente beibehalten</label>
              <hr />
              <p class="plabel">Nahe gelegene Öffnungen</p>
              <div class="near">
                <button type="button" class="gbtn" aria-label="Vertikal"><Ic n="gapV" :w="58" :h="38" /></button>
                <input class="pfield" type="text" value="0,300" aria-label="Vertikaler Abstand" />
                <button type="button" class="wbtn linkbtn" disabled aria-label="Verketten"><Ic n="link" :w="18" :h="58" /></button>
                <button type="button" class="wbtn" aria-label="Horizontal"><Ic n="gapH" :w="58" :h="26" /></button>
                <input class="pfield" type="text" value="0,000" disabled aria-label="Horizontaler Abstand" />
              </div>
              <hr />
              <p class="plabel">Element-ID und Eigenschaften:</p>
              <label class="check r1"><input type="radio" name="src" checked />Übernehmen aus Original</label>
              <label class="check r2"><input type="radio" name="src" />Werkzeug-Standardwerte verwenden</label>
              <button type="submit" class="wbtn create">Öffnungen erstellen</button>
            </form>
          </div>

          <footer class="quick">
            <div class="q zooms"><button aria-label="Zurück"><Ic n="zprev" :w="34" :h="32" /></button><button aria-label="Vor"><Ic n="znext" :w="34" :h="32" /></button><button aria-label="Vergrößern"><Ic n="zin" :w="34" :h="32" /></button></div>
            <div class="q nav"><button aria-label="Orbit"><Ic n="orbit" :w="30" :h="28" /></button><button aria-label="Gehen"><Ic n="walk" :w="24" :h="30" /></button></div>
            <button class="q off"><Ic n="zfit" :w="34" :h="32" /><span>keine D...</span><Ic n="right" :w="8" :h="14" /></button>
            <button class="q off"><Ic n="dia" :w="34" :h="32" /><span>keine D...</span><Ic n="right" :w="8" :h="14" /></button>
            <button v-for="(q, i) in quick" :key="i" class="q opt"><Ic :n="q[0]" :w="34" :h="32" /><span>{{ q[1] }}</span><Ic n="right" :w="8" :h="14" /></button>
          </footer>
        </section>

        <aside class="navigator">
          <div class="handle"><i></i></div>
          <div class="navtabs">
            <button class="plain" aria-label="Projekt"><Ic n="house" :w="36" :h="30" /></button><span class="vsep"></span>
            <button class="plain" aria-label="Ausschnitte"><Ic n="houseFrame" :w="36" :h="30" /></button>
            <button class="plain" aria-label="Layouts"><Ic n="layoutPlan" :w="36" :h="30" /></button>
            <button class="gbtn" aria-label="Publisher"><Ic n="books" :w="36" :h="34" /></button>
            <button class="wbtn" aria-label="Menü"><Ic n="burger" :w="26" :h="22" /><Ic n="right" :w="8" :h="14" /></button>
          </div>
          <div class="navset"><button class="wbtn upbtn" aria-label="Nach oben"><Ic n="up" :w="30" :h="26" /></button><button class="wbtn set"><Ic n="book" :w="30" :h="30" /><span>Beispiel BIMx</span><Ic n="right" :w="8" :h="14" /></button></div>
          <label class="search"><Ic n="lens" :w="28" :h="26" /><input type="search" placeholder="'Beispiel BIMx' durchsuc" aria-label="Durchsuchen" /></label>
          <ul class="tree">
            <li v-for="(n, i) in tree" :key="i" :class="'lv' + n.level">
              <span class="chev"><Ic v-if="n.open === true" n="down" :w="14" :h="10" /><Ic v-else-if="n.open === false" n="right" :w="8" :h="14" /></span>
              <Ic :n="n.icon" :w="36" :h="36" /><span class="nt">{{ n.text }}</span>
            </li>
          </ul>
          <div class="hscroll"><i></i></div>
          <div class="actions"><button class="plain" aria-label="Neuer Ordner"><Ic n="newFolder" :w="42" :h="34" /></button><button class="plain" aria-label="Löschen"><Ic n="cross" :w="28" :h="30" /></button></div>
          <button class="group nb"><i class="tri-r"></i>Beschreibungen</button>
          <button class="group nb"><i class="tri-d"></i>Format</button>
          <div class="fmt"><select disabled aria-label="Format"><option></option></select><Ic n="updown" :w="14" :h="21" /></div>
          <div class="publish"><button class="wbtn pub">Publizieren</button><button class="wbtn pl" aria-label="Liste"><Ic n="listTree" :w="30" :h="26" /><Ic n="right" :w="8" :h="14" /></button></div>
          <div class="handle h2"><i></i></div>
          <div class="ref"><button class="wbtn dis sq" disabled aria-label="Transparentpause"><Ic n="traceW" :w="38" :h="36" /></button><button class="wbtn dis egb" disabled><Ic n="planG" :w="36" :h="32" /><span>0. EG</span><Ic n="right" :w="8" :h="14" /></button></div>
          <div class="traces"><Ic n="swap" :w="38" :h="37" /><span class="sp"></span><Ic v-for="k in traceTools" :key="k" :n="k" :w="36" :h="36" /></div>
          <div class="slid">
            <label for="s1">Transparentpause:</label>
            <div class="srow"><button class="wbtn dis sq" disabled aria-label="Farbe"><i class="red"></i><Ic n="right" :w="8" :h="14" /></button><span class="sl"><input id="s1" type="range" value="100" disabled /><span class="ticks"><i v-for="k in 11" :key="k"></i></span></span><button class="wbtn dis ar" disabled aria-label="Mehr"><Ic n="right" :w="8" :h="14" /></button></div>
            <label for="s2">Aktiv:</label>
            <div class="srow"><button class="wbtn dis sq" disabled aria-label="Farben"><Ic n="pie" :w="26" :h="26" /><Ic n="right" :w="8" :h="14" /></button><span class="sl"><input id="s2" type="range" value="100" disabled /><span class="ticks"><i v-for="k in 11" :key="k"></i></span></span><span class="ar"></span></div>
          </div>
          <div class="foot"><Ic v-for="k in footTools" :key="k" :n="k" :w="36" :h="36" /></div>
        </aside>
      </div>

      <footer class="status"><Ic n="windows" :w="34" :h="28" /><i></i><span class="brand">GRAPHISOFT <b>ID</b></span></footer>
    </main>

    <svg class="marks" viewBox="0 0 2992 2144" preserveAspectRatio="xMinYMin meet" aria-hidden="true">
      <defs><filter id="crayon" filterUnits="userSpaceOnUse" x="0" y="0" width="2992" height="2144"><feTurbulence type="fractalNoise" baseFrequency=".3" numOctaves="2" seed="3" /><feDisplacementMap in="SourceGraphic" scale="9" xChannelSelector="R" yChannelSelector="G" /></filter></defs>
      <g filter="url(#crayon)" fill="none" stroke="#ed50f6" stroke-width="8">
        <path d="M335 293H411V364H335Z" /><path d="M1193 253H1562V366H1193Z" /><path d="M1968 1350H2343V1426H1968Z" />
        <path d="M432 396L1308 985" stroke-width="9" /><path d="M412 385H450L426 416Z" fill="#ed50f6" />
      </g>
    </svg>
  </div>
</template>

<style>
body { margin: 0; background: #fff; }
</style>

<style scoped>
* { box-sizing: border-box; }
.page { position: relative; min-height: 100vh; display: flex; padding: 52px 68px 84px; background: #fefefe; font-family: Inter, "Liberation Sans", sans-serif; font-size: 22px; line-height: 28px; color: #1f1f1f; overflow: hidden; }
button, input, select { font: inherit; color: inherit; margin: 0; border: 0; padding: 0; background: none; }
button { display: flex; align-items: center; white-space: nowrap; }
h1, h2, p, ul { margin: 0; padding: 0; font-weight: 400; list-style: none; }
.ic { display: block; flex: none; overflow: visible; fill: none; stroke: currentColor; stroke-width: 2.5; stroke-linejoin: round; color: #26323a; }
.window { flex: 1; min-width: 0; display: flex; flex-direction: column; background: #e6e6e6; border-radius: 24px; overflow: hidden; box-shadow: 0 0 0 1px #a9a9a9, 0 0 60px rgba(0,0,0,.12), 0 32px 48px rgba(0,0,0,.26); }
.titlebar { flex: none; height: 58px; position: relative; display: flex; align-items: center; justify-content: center; background: #e9eaec; border-bottom: 2px solid #c4c6c8; }
.titlebar h1 { display: flex; align-items: center; gap: 12px; font-size: 26px; font-weight: 600; color: #a8a9ab; }
.lights { position: absolute; left: 16px; display: flex; gap: 16px; }
.lights i { width: 24px; height: 24px; border-radius: 50%; background: #cfd0d2; border: 1px solid #b9babc; }
.bar { flex: none; height: 70px; padding-bottom: 4px; display: flex; align-items: center; background: #ebebeb; overflow: hidden; }
.grip { flex: none; width: 20px; height: 28px; border-left: 2px solid #b4b4b4; margin-left: 7px; margin-right: -7px; }
.vsep { flex: none; width: 22px; height: 44px; display: flex; justify-content: center; }
.vsep::before { content: ""; width: 2px; background: #d0d0d0; }
.cell { flex: none; width: 60px; display: flex; justify-content: center; }
.dropcell { flex: none; width: 30px; display: flex; justify-content: center; }
.tool { width: 54px; height: 50px; justify-content: center; border-radius: 9px; }
.dropbtn { width: 24px; height: 50px; justify-content: center; border-radius: 8px; }
.on, .gbtn { background: #c0bfc4; border-radius: 9px; box-shadow: 0 1px 1px rgba(0,0,0,.1); }
.band { flex: none; padding: 2px 0; display: flex; }
.second { width: 356px; height: 72px; padding-bottom: 2px; }
.info { flex: none; height: 120px; display: flex; background: #ebebeb; overflow: hidden; }
.sec { flex: none; width: 370px; padding: 0 11px 0 7px; border-left: 2px solid #d2d2d2; display: flex; flex-direction: column; }
.sec.first { width: 379px; padding: 0 0 0 18px; border: 0; position: relative; }
.sec.first::before { content: ""; position: absolute; left: 7px; top: 38px; height: 46px; border-left: 2px solid #b4b4b4; }
.sec.tail { flex: 1; width: auto; }
.sec h2, .small { font-size: 18px; line-height: 20px; padding-top: 7px; white-space: nowrap; }
.small { padding-top: 15px; }
.wbtn { background: #fff; border-radius: 9px; box-shadow: 0 1px 3px rgba(0,0,0,.28); }
.mainbtns { display: flex; align-items: flex-end; gap: 4px; margin-top: -16px; }
.mainbtns .wbtn { height: 56px; justify-content: center; }
.mainbtns .pair { width: 80px; height: 40px; padding: 4px 4px 0 9px; justify-content: space-between; }
.mainbtns .gbtn { width: 78px; height: 38px; justify-content: center; align-self: flex-end; }
.mainbtns .morphbtn { width: 70px; }
.mainbtns .thin { width: 26px; }
.wide { height: 56px; width: 350px; margin-top: 21px; padding: 0 7px 0 12px; gap: 7px; }
.end { margin-left: auto; }
.geo { display: flex; align-items: center; margin-top: 21px; height: 56px; padding-left: 27px; }
.geo .plain + .plain { margin: 0 22px 0 46px; }
.geo .geo3 { width: 84px; height: 54px; justify-content: center; margin: 0 28px 0 6px; }
.struct { padding-left: 23px; gap: 2px; }
.sw { width: 48px; height: 42px; border: 2px solid #111; background: #fff; }
.dots { background: radial-gradient(circle at 1px 1px, #b8b8b8 1px, transparent 1px) 0 0 / 4px 4px, #1b1b1b; }
.st { margin-left: 13px; }
.level { display: flex; align-items: flex-end; gap: 20px; margin-top: 13px; padding-left: 9px; width: 351px; }
.lvcol { flex: 1; }
.lvtop { display: flex; align-items: center; justify-content: flex-end; gap: 2px; margin-bottom: 7px; }
.mini { width: 34px; height: 32px; justify-content: center; }
.field { display: block; width: 100%; height: 33px; padding: 0 7px; background: #fff; border: 1px solid #d4d4d4; border-bottom: 2px solid #b4b4b4; }
.linked { padding-top: 13px; }
.eg { display: flex; align-items: center; height: 34px; margin-top: 12px; padding-left: 18px; gap: 22px; margin-right: -3px; }
.eg .mini { margin-left: auto; }
.idrow { display: flex; align-items: center; gap: 8px; margin: 21px 0 0 1px; }
.field.id { width: 262px; height: 42px; }
.docbtn { width: 78px; height: 56px; padding: 0 7px 0 17px; justify-content: space-between; flex: none; }
.klass { display: flex; align-items: center; gap: 8px; padding: 33px 0 0 4px; white-space: nowrap; }
.body { flex: 1; min-height: 0; display: flex; gap: 3px; padding-top: 3px; }
.handle { height: 16px; display: flex; align-items: center; justify-content: center; background: #ebebeb; flex: none; }
.handle i { width: 38%; height: 2px; background: #ababab; }
.toolbox { flex: none; width: 311px; display: flex; flex-direction: column; background: #eeeff2; }
.row { flex: none; height: 56px; padding-left: 16px; gap: 16px; color: #000; width: 100%; }
.row.sel { height: 49px; margin: 0 1px 0 4px; width: auto; padding-left: 12px; background: #c0bfc4; border-radius: 9px; }
.row.marquee { height: 62px; }
.group { flex: none; height: 40px; padding-left: 12px; gap: 16px; background: #d5d5d5; border-radius: 6px; color: #1f1f1f; }
.group.first { margin-bottom: 1px; }
.tri-d { width: 16px; border: 8px solid transparent; border-top: 13px solid #8d9598; border-bottom: 0; }
.tri-r { width: 13px; margin: 0 2px 0 1px; border: 8px solid transparent; border-left: 13px solid #8d9598; border-right: 0; }
.group.gap { margin: 3px 0 1px; }
.group.last { height: 38px; margin-top: 2px; }
.scroller { flex: 1; min-height: 0; display: flex; overflow: hidden; }
.views { flex: 1; height: 0; min-width: 0; }
.row.dim, .row.dim .ic { color: #7b8083; }
.track { width: 19px; background: #fafafa; border-left: 1px solid #e2e2e2; padding: 8px 3px; }
.track i { display: block; height: 83%; border-radius: 6px; background: #7d7d7d; }
.center { flex: 1; min-width: 0; display: flex; flex-direction: column; }
.tabs { flex: none; height: 43px; display: flex; }
.overview { width: 66px; padding-left: 14px; border-right: 2px solid #b4b4b4; }
.tab { width: 600px; justify-content: center; gap: 7px; color: #3a3a3a; }
.tab.active { background: #fff; }
.tabfill { flex: 1; background: #e2e2e2; }
.tabmenu { width: 99px; background: #f8f8f8; padding-left: 22px; gap: 14px; }
.viewport { flex: 1; min-height: 0; position: relative; background: #fff; overflow: hidden; }
.scene { position: absolute; inset: 0; width: 100%; height: 100%; }
.axis { font-size: 22px; }
.dock { position: absolute; background-color: #eee; background-repeat: no-repeat; background-position: center; }
.dock.top, .dock.bottom { width: 64px; height: 30px; left: 1054px; background-image: repeating-linear-gradient(90deg, #f08a35 0 10px, transparent 10px 14px); background-size: 52px 3px; }
.dock.top { top: 3px; border-radius: 0 0 8px 8px; }
.dock.bottom { bottom: 2px; border-radius: 8px 8px 0 0; }
.dock.left, .dock.right { width: 32px; height: 64px; top: 744px; background-image: repeating-linear-gradient(0deg, #f08a35 0 10px, transparent 10px 14px); background-size: 3px 52px; }
.dock.left { left: 2px; border-radius: 0 8px 8px 0; }
.dock.right { right: 0; border-radius: 8px 0 0 8px; }
.palette { position: absolute; left: 1588px; top: 172px; width: 372px; padding: 0 6px 16px; background: #ececec; display: flex; flex-direction: column; }
.ptitle { height: 34px; margin: 0 -6px; padding: 0 8px; display: flex; align-items: center; background: #dedede; color: #000; }
.ptitle i { width: 18px; height: 18px; border-radius: 50%; background: #ee6a5f; }
.ptitle span { flex: 1; text-align: center; padding-left: 14px; }
.pcount { display: flex; justify-content: space-between; padding: 14px 0 20px; }
hr { width: 100%; height: 2px; border: 0; margin: 0; background: #d2d2d2; }
.plabel { padding: 16px 0 0; }
.shapes { display: flex; align-items: center; gap: 20px; padding: 18px 0 0 38px; }
.shapes .gbtn { width: 66px; height: 44px; justify-content: center; }
.shapes .plain + .plain { margin-left: 16px; }
.plabel.versatz { padding-top: 20px; }
.offrow { display: flex; align-items: center; gap: 15px; padding: 14px 0 0 42px; }
.pfield { width: 127px; height: 42px; padding: 0 6px; background: #fff; border: 1px solid #d4d4d4; border-bottom-color: #b0b0b0; color: #111; }
.pfield:disabled { background: #f4f4f4; color: #bbb; }
.pfield.focus { outline: 6px solid #8ea8ee; border-radius: 2px; }
.pfield::selection { background: #b9d6fb; color: #111; }
.check { display: flex; align-items: center; gap: 12px; color: #000; padding: 23px 0 27px; white-space: nowrap; }
.check input { appearance: none; flex: none; width: 28px; height: 28px; border-radius: 7px; background: #fff; box-shadow: inset 0 0 0 1px #d0d0d0; display: grid; place-items: center; }
.check input:checked { background: #3b82f7; box-shadow: none; }
.check input[type="checkbox"]:checked::after { content: ""; width: 8px; height: 15px; margin-top: -4px; border: solid #fff; border-width: 0 4px 4px 0; transform: rotate(42deg); }
.check input[type="radio"] { border-radius: 50%; }
.check input[type="radio"]:checked::after { content: ""; width: 12px; height: 12px; border-radius: 50%; background: #fff; }
.near { display: grid; grid-template-columns: 66px 127px 40px; column-gap: 14px; row-gap: 8px; padding: 15px 0 17px 38px; }
.near .gbtn, .near .wbtn { height: 42px; justify-content: center; }
.near .linkbtn { grid-column: 3; grid-row: 1 / 3; height: 92px; background: #f5f5f5; box-shadow: 0 0 2px rgba(0,0,0,.25); }
.check.r1 { padding: 30px 0 0; }
.check.r2 { align-items: flex-start; padding: 32px 0 0; white-space: normal; }
.create { height: 42px; margin: 24px 2px 0; justify-content: center; }
.quick { flex: none; height: 36px; display: flex; background: #ebebeb; margin-bottom: 2px; overflow: hidden; }
.q { flex: none; padding: 2px 9px 0 10px; border-right: 2px solid #cfcfcf; display: flex; align-items: center; gap: 12px; color: #1f1f1f; height: 36px; }
.q > .ic:last-child { margin: 0 9px 0 auto; }
.zooms { width: 145px; padding: 2px 0 0 4px; gap: 12px; }
.nav { width: 102px; gap: 20px; padding-left: 10px; }
.off { width: 176px; color: #b1b1b1; }
.off > .ic:last-child { color: #888; }
.opt { width: 176px; }
.opt:last-child { flex: 1 0 165px; padding-right: 0; border: 0; }
.opt:last-child > .ic:last-child { margin-right: 2px; }
.opt:nth-child(5) span { padding-left: 18px; }
.opt:nth-child(5) { padding-right: 0; }
.navigator { flex: none; width: 368px; display: flex; flex-direction: column; background: #ebebeb; margin-bottom: 2px; overflow: hidden; }
.navtabs { display: flex; align-items: center; height: 62px; padding: 0 6px 0 16px; }
.navtabs .vsep { width: 48px; height: 40px; }
.navtabs .plain + .plain { margin-left: 24px; }
.navtabs .gbtn { width: 56px; height: 54px; margin-left: 14px; justify-content: center; }
.navtabs .wbtn { width: 66px; height: 42px; margin-left: auto; padding: 0 2px 0 18px; justify-content: space-between; }
.navset { display: flex; gap: 8px; padding: 12px 6px 0; }
.navset .wbtn { height: 42px; }
.upbtn { width: 42px; justify-content: center; }
.navset .set { flex: 1; padding: 0 2px 0 8px; }
.set span { flex: 1; text-align: center; padding-right: 38px; }
.search { display: flex; align-items: center; gap: 12px; height: 41px; margin: 7px 6px 7px; padding-left: 13px; background: #fff; border: 1px solid #d4d4d4; border-bottom: 2px solid #b4b4b4; }
.search input { flex: 1; min-width: 0; outline: 0; }
.search input::placeholder { color: #c4c4c4; opacity: 1; }
.tree { flex: none; height: 458px; background: #fff; overflow: hidden; border-bottom: 1px solid #ddd; color: #000; }
.tree li { display: flex; align-items: center; height: 48px; white-space: nowrap; padding-left: 5px; gap: 9px; }
.tree .lv1 { padding-left: 33px; }
.tree .lv2 { padding-left: 61px; }
.chev { flex: none; width: 22px; display: flex; justify-content: center; margin-right: 2px; }
.chev .ic { color: #888; }
.hscroll { flex: none; height: 27px; background: #fafafa; padding: 6px; }
.hscroll i { display: block; width: 247px; height: 16px; border-radius: 8px; background: #c1c1c1; }
.actions { display: flex; align-items: center; gap: 23px; height: 71px; padding-left: 15px; }
.nb { height: 44px; margin: 0 4px 8px; padding-left: 13px; gap: 15px; }
.fmt { position: relative; margin: 1px 6px 0; flex: 1; }
.fmt select { appearance: none; width: 100%; height: 40px; border-radius: 9px; background: #f6f6f6; box-shadow: 0 1px 2px rgba(0,0,0,.2); }
.fmt .ic { position: absolute; right: 13px; top: 10px; }
.publish { display: flex; gap: 8px; height: 60px; padding: 7px 6px 0 14px; border-top: 2px solid #d2d2d2; border-bottom: 1px solid #dedede; }
.publish .wbtn { height: 42px; }
.pub { flex: 1; justify-content: center; }
.pl { width: 66px; padding: 0 2px 0 8px; justify-content: space-between; }
.h2 { height: 21px; }
.ref { display: flex; gap: 4px; padding: 0 6px; }
.dis { background: #f5f5f5; box-shadow: 0 1px 2px rgba(0,0,0,.2); color: #bdbdbd; }
.dis > .ic:last-child { color: #9a9a9a; }
.sq { width: 56px; height: 56px; justify-content: center; gap: 10px; }
.egb { flex: 1; height: 56px; padding: 0 3px 0 6px; gap: 3px; }
.egb .ic:last-child { margin-left: auto; }
.traces { display: flex; align-items: center; gap: 24px; height: 78px; padding: 0 16px 0 15px; border-bottom: 2px solid #d2d2d2; }
.sp { flex: 1; }
.slid { color: #737373; border-bottom: 2px solid #d2d2d2; padding: 0 6px 12px; }
.slid label { display: block; height: 53px; padding-top: 13px; margin-left: -1px; }
.slid label + .srow + label { height: 50px; padding-top: 11px; }
.srow { display: flex; align-items: center; gap: 6px; }
.sl { flex: 1; height: 34px; position: relative; margin-left: 2px; }
.sl input { appearance: none; display: block; width: 100%; height: 34px; position: relative; background: linear-gradient(#e2e2e2, #e2e2e2) center / 100% 6px no-repeat; }
.sl input::-webkit-slider-thumb { appearance: none; width: 16px; height: 34px; border-radius: 8px; background: #f6f6f6; box-shadow: 0 1px 2px rgba(0,0,0,.3); }
.ticks { position: absolute; left: 1px; right: 1px; bottom: -2px; display: flex; justify-content: space-between; }
.ticks i { width: 2px; height: 6px; background: #a9a9a9; }
.ar { width: 26px; height: 56px; justify-content: center; }
.red { width: 24px; height: 24px; background: #f19a8e; }
.foot { flex: none; display: flex; align-items: center; gap: 26px; height: 74px; padding-left: 74px; padding-top: 10px; }
.status { flex: none; height: 48px; display: flex; align-items: center; justify-content: flex-end; padding: 0 24px 8px 0; background: #ebebeb; color: #26323a; }
.status i { width: 2px; height: 28px; margin: 0 22px 0 20px; background: #999; }
.brand { font-family: Lato, sans-serif; font-size: 27px; }
.brand b { font-weight: 300; }
.marks { position: absolute; left: 0; top: 0; width: 100%; pointer-events: none; }
</style>
